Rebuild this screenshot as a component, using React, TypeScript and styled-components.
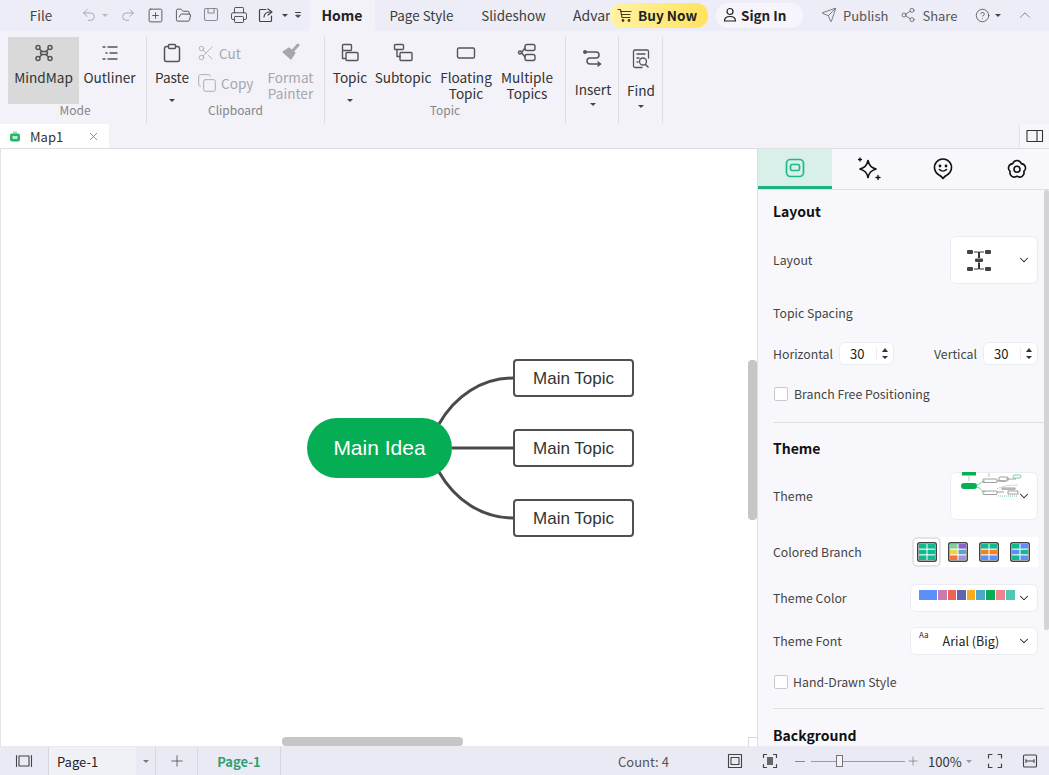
import React from 'react';
import styled, { createGlobalStyle } from 'styled-components';
import { Undo2, Redo2, SquarePlus, FolderOpen, Printer, Send, Share2, CircleHelp, ChevronUp, ChevronDown, X, Plus, Scissors, Copy } from 'lucide-react';

const Global = createGlobalStyle`
  html, body { margin: 0; padding: 0; height: 100%; overflow: hidden; }
  body { font-family: "Noto Sans CJK SC", "Noto Sans", sans-serif; color: #333; background: #f2f2f8; }
  #root { height: 100%; }
  svg { display: block; flex: none; }
`;

const Page = styled.div`
  width: 1049px; height: 775px; display: flex; flex-direction: column; overflow: hidden; font-size: 13px;
`;

/* ---------- title bar ---------- */
const TopBar = styled.div`
  height: 31px; flex: none; box-sizing: border-box; padding-bottom: 1px; display: flex; align-items: center; background: #ecedf6; font-size: 13.4px;
`;
const QuickGroup = styled.div`
  width: 309px; height: 100%; display: flex; align-items: center; flex: none;
`;
const QuickBtn = styled.div<{ $w: number; $off?: boolean }>`
  width: ${p => p.$w}px; height: 100%; flex: none; display: flex; align-items: center; justify-content: center;
  color: ${p => (p.$off ? '#8f8f96' : '#444')};
`;
const MenuTab = styled.div<{ $w: number; $active?: boolean }>`
  width: ${p => p.$w}px; height: 31px; flex: none; display: flex; align-items: center; justify-content: center;
  background: ${p => (p.$active ? '#f2f2f8' : 'transparent')};
  font-weight: ${p => (p.$active ? 700 : 400)};
  font-size: ${p => (p.$active ? 14 : 13.4)}px;
  color: ${p => (p.$active ? '#222' : '#3c3c3c')};
  padding-bottom: 1px; box-sizing: border-box; margin-top: 1px;
`;
const ClippedTab = styled.div`
  width: 51px; height: 100%; flex: none; padding-left: 14px; box-sizing: border-box; display: flex; align-items: center;
  overflow: hidden; white-space: nowrap; color: #3c3c3c; font-size: 14px;
`;
const BuyPill = styled.div`
  width: 98px; height: 25px; flex: none; box-sizing: border-box; padding-left: 7px; display: flex; align-items: center; gap: 5px;
  border-radius: 12px; background: linear-gradient(90deg, #fff3a6, #ffe35e); font-weight: 700; color: #222; font-size: 13.6px;
`;
const SignPill = styled.div`
  width: 87px; height: 25px; flex: none; margin-left: 8px; box-sizing: border-box; padding-left: 7px; display: flex; align-items: center; gap: 4px;
  border-radius: 12px; background: #f5f5fb; font-weight: 700; color: #222; font-size: 13.5px;
`;
const ShareAction = styled.div<{ $ml: number }>`
  margin-left: ${p => p.$ml}px; display: flex; align-items: center; gap: 6px; color: #555; flex: none; font-size: 13px;
`;
const HelpBox = styled.div`
  margin-left: 18px; display: flex; align-items: center; gap: 5px; color: #444; flex: none;
`;
const Collapse = styled.div`
  margin-left: 15px; color: #666; flex: none;
`;
const Caret = styled.span<{ $c?: string; $mt?: number }>`
  display: block; width: 0; height: 0; flex: none;
  border-left: 3px solid transparent; border-right: 3px solid transparent;
  border-top: 3px solid ${p => p.$c || '#444'};
  margin-top: ${p => p.$mt || 0}px;
`;

/* ---------- ribbon ---------- */
const Ribbon = styled.div`
  height: 93px; flex: none; display: flex; background: #f2f2f8; box-sizing: border-box; padding-top: 6px;
`;
const Group = styled.div<{ $w: number; $pl?: number }>`
  width: ${p => p.$w}px; flex: none; box-sizing: border-box; padding-left: ${p => p.$pl || 0}px; height: 86px;
  display: flex; flex-direction: column; border-right: 1px solid #dcdce3;
`;
const GroupRow = styled.div`
  height: 67px; display: flex; flex: none;
`;
const GroupLabel = styled.div<{ $pr?: number }>`
  height: 12px; line-height: 12px; margin-top: 0; display: flex; align-items: center; justify-content: center;
  font-size: 12px; color: #85858b; padding-right: ${p => p.$pr || 0}px;
`;
const Tool = styled.div<{ $w: number; $active?: boolean; $off?: boolean; $tall?: boolean }>`
  width: ${p => p.$w}px; height: 67px; flex: none; display: flex; flex-direction: column; align-items: center;
  padding-top: ${p => (p.$tall ? 12 : 6)}px; box-sizing: border-box;
  background: ${p => (p.$active ? '#d9d9d9' : 'transparent')};
  color: ${p => (p.$off ? '#a6a6ac' : '#333')};
  font-size: 13.6px; line-height: 16px; text-align: center; white-space: nowrap;
`;
const ToolIcon = styled.div<{ $mb: number }>`
  height: 20px; display: flex; align-items: center; justify-content: center; margin-bottom: ${p => p.$mb}px; color: #555;
`;
const SmallStack = styled.div`
  width: 72px; flex: none; display: flex; flex-direction: column; padding-top: 1px; box-sizing: border-box;
`;
const SmallTool = styled.div`
  height: 30px; display: flex; align-items: center; gap: 4px; color: #a6a6ac; font-size: 13.6px;
`;

/* ---------- doc tabs ---------- */
const DocStrip = styled.div`
  height: 24px; flex: none; display: flex; justify-content: space-between; background: #f2f2f8;
`;
const DocTab = styled.div`
  width: 109px; box-sizing: border-box; background: #fff; display: flex; align-items: center; padding-left: 9px; font-size: 13px; color: #333;
`;
const DocName = styled.span`
  margin-left: 9px; width: 57px;
`;
const PanelToggle = styled.div`
  width: 30px; box-sizing: border-box; background: #f7f7fb; border-left: 1px solid #e3e3e8; display: flex; align-items: center; justify-content: center; color: #444;
`;

/* ---------- main ---------- */
const Main = styled.div`
  flex: 1; display: flex; min-height: 0; border-top: 1px solid #dfdfe3;
`;
const Canvas = styled.div`
  width: 757px; flex: none; position: relative; background: #fff; border-left: 1px solid #e3e3e8; box-sizing: border-box; overflow: hidden;
`;
const Connectors = styled.svg`
  position: absolute; left: -1px; top: 0; width: 757px; height: 597px;
`;
const RootNode = styled.div`
  position: absolute; left: 306px; top: 269px; width: 145px; height: 60px; border-radius: 30px; background: #05ae55; color: #fff;
  display: flex; align-items: center; justify-content: center; font: 21px "Liberation Sans", sans-serif;
`;
const TopicNode = styled.div<{ $top: number }>`
  position: absolute; left: 512px; top: ${p => p.$top}px; width: 121px; height: 38px; box-sizing: border-box; padding-top: 1px;
  border: 2px solid #505050; border-radius: 4px; background: #fff; color: #333;
  display: flex; align-items: center; justify-content: center; font: 17px "Liberation Sans", sans-serif;
`;
const VScroll = styled.div`
  position: absolute; right: 0; top: 211px; width: 9px; height: 160px; border-radius: 4px; background: #c6c6c6;
`;
const HScroll = styled.div`
  position: absolute; left: 281px; bottom: 0; width: 181px; height: 9px; border-radius: 4px; background: #c6c6c6;
`;
const ScrollCorner = styled.div`
  position: absolute; right: 0; bottom: 0; width: 8px; height: 8px; border-left: 1px solid #d8d8d8; border-top: 1px solid #d8d8d8;
`;

/* ---------- side panel ---------- */
const Panel = styled.div`
  width: 292px; flex: none; position: relative; box-sizing: border-box; border-left: 1px solid #dfdfe3; background: #f8f8fc; display: flex; flex-direction: column; overflow: hidden;
`;
const PanelTabs = styled.div`
  height: 41px; flex: none; display: flex; border-bottom: 1px solid #dfdfe3; box-sizing: border-box;
`;
const PanelTab = styled.div<{ $active?: boolean }>`
  width: 74px; flex: none; display: flex; align-items: center; justify-content: center; box-sizing: border-box;
  background: ${p => (p.$active ? '#d9efe9' : 'transparent')};
  border-bottom: 3px solid ${p => (p.$active ? '#1cb286' : 'transparent')};
  height: 40px; padding-top: ${p => (p.$active ? 0 : 3)}px;
`;
const PanelBody = styled.div`
  padding: 0 5px 0 15px; display: flex; flex-direction: column; flex: 1; min-height: 0; font-size: 12.3px; color: #444; line-height: 18px;
`;
const SectionTitle = styled.div<{ $mt: number }>`
  margin-top: ${p => p.$mt}px; height: 20px; line-height: 20px; font-size: 14px; font-weight: 700; color: #111; flex: none;
`;
const Row = styled.div<{ $h: number; $mt: number }>`
  height: ${p => p.$h}px; margin-top: ${p => p.$mt}px; display: flex; align-items: center; justify-content: space-between; flex: none; padding-right: 6px;
`;
const SelectBox = styled.div<{ $w: number; $h: number; $pl?: number }>`
  width: ${p => p.$w}px; height: ${p => p.$h}px; flex: none; position: relative; box-sizing: border-box; background: #fff; border: 1px solid #ecedf2; border-radius: 6px;
  display: flex; align-items: center; justify-content: space-between; padding: 0 6px 0 ${p => p.$pl || 8}px; color: #222;
`;
const ChevronOver = styled.div`
  position: absolute; right: 6px; top: 16px; color: #222;
`;
const ThumbOver = styled.svg`
  position: absolute; left: 9px; top: -1px;
`;
const NumberGroup = styled.div`
  display: flex; align-items: center; gap: 6px;
`;
const NumberBox = styled.div`
  width: 55px; height: 23px; flex: none; box-sizing: border-box; background: #fff; border: 1px solid #ecedf2; border-radius: 6px;
  display: flex; align-items: center; justify-content: space-between; padding: 0 5px 0 10px; color: #222; font-size: 13px;
`;
const Steppers = styled.div`
  display: flex; flex-direction: column; gap: 4px; border-left: 1px solid #ecedf2; padding-left: 5px;
`;
const CaretUp = styled.span`
  display: block; width: 0; height: 0; border-left: 3px solid transparent; border-right: 3px solid transparent; border-bottom: 4px solid #333;
`;
const CheckRow = styled.label<{ $mt: number; $gap: number }>`
  margin-top: ${p => p.$mt}px; height: 18px; display: flex; align-items: center; gap: ${p => p.$gap}px; flex: none;
`;
const CheckBox = styled.span`
  width: 14px; height: 14px; box-sizing: border-box; background: #fff; border: 1px solid #c8c8ce; border-radius: 2px; display: block; margin-left: 1px;
`;
const Divider = styled.div<{ $mt: number }>`
  margin-top: ${p => p.$mt}px; height: 1px; background: #dfdfe4; flex: none;
`;
const SwatchRow = styled.div`
  display: flex; align-items: center; gap: 2px; background: #fff; width: 126px; height: 30px; flex: none;
`;
const Swatch = styled.div<{ $active?: boolean }>`
  width: 29px; height: 30px; flex: none; box-sizing: border-box; display: flex; align-items: center; justify-content: center;
  border: 2px solid ${p => (p.$active ? '#e4e4e8' : 'transparent')}; border-radius: 5px;
`;
const ColorStrip = styled.div`
  display: flex; margin-top: -7px;
`;
const ColorCell = styled.span<{ $c: string; $w: number }>`
  display: block; width: ${p => p.$w}px; height: 10px; background: ${p => p.$c}; margin-right: 1px;
`;
const FontName = styled.span`
  font-size: 12.5px; color: #222; margin-left: 14px; margin-right: auto;
`;
const AaMark = styled.span`
  font-size: 8px; color: #222; align-self: flex-start; margin-top: 1px; line-height: 12px;
`;
const PanelScroll = styled.div`
  position: absolute; right: 0; top: 41px; width: 5px; height: 440px; background: #d4d4d6; border-radius: 2px;
`;

/* ---------- status bar ---------- */
const Status = styled.div`
  height: 29px; flex: none; box-sizing: border-box; padding-top: 1px; display: flex; align-items: center; background: #e9eaf3; color: #444; font-size: 13px;
`;
const StatusCell = styled.div<{ $w: number; $sep?: boolean }>`
  width: ${p => p.$w}px; height: 100%; flex: none; box-sizing: border-box; display: flex; align-items: center; justify-content: center;
  border-right: ${p => (p.$sep ? '1px solid #d6d7e0' : 'none')};
`;
const PagePick = styled.div`
  width: 87px; height: 100%; flex: none; box-sizing: border-box; padding-left: 8px; background: #f0f0f7; display: flex; align-items: center; color: #222;
`;
const ActivePage = styled.span`
  color: #2f9f75; font-weight: 700;
`;
const CountText = styled.div`
  width: 100px; flex: none; margin-left: 337px; color: #555; white-space: nowrap;
`;
const ZoomMinus = styled.span`
  display: block; width: 10px; height: 1px; background: #888;
`;
const Slider = styled.div`
  width: 94px; height: 1px; background: #9b9ba3; flex: none; position: relative;
`;
const Thumb = styled.div`
  position: absolute; left: 25px; top: -6px; width: 7px; height: 12px; box-sizing: border-box; background: #f4f4f8; border: 1px solid #777;
`;
const ZoomText = styled.div`
  margin-left: 7px; font-size: 13px; color: #333; display: flex; align-items: center; gap: 4px; width: 50px; flex: none;
`;

/* ---------- drawn icons ---------- */
const S = ({ w = 20, h = 20, sw = 1.3, c = 'currentColor', children }: { w?: number; h?: number; sw?: number; c?: string; children: React.ReactNode }) => (
  <svg width={w} height={h} viewBox={`0 0 ${w} ${h}`} fill="none" stroke={c} strokeWidth={sw} strokeLinecap="round" strokeLinejoin="round">{children}</svg>
);

const SaveIc = () => (
  <S w={16} h={16} sw={1.1} c="#8b8b92"><rect x="1.5" y="1.5" width="13" height="12" rx="1.5" /><path d="M5 2v4h6V2" /></S>
);
const ExportIc = () => (
  <S w={16} h={16} sw={1.2}><path d="M8 2.5H2.5a1 1 0 0 0-1 1v10a1 1 0 0 0 1 1h10a1 1 0 0 0 1-1V9" /><path d="M6 10c.3-3 2.5-5 6-5M10 2l4 3-4 3" /></S>
);
const MoreIc = () => (
  <S w={8} h={10} sw={1}><path d="M1.5 2.5h5" /><path d="M2 5.5l2 2 2-2z" fill="#444" /></S>
);
const MindMapIc = () => (
  <S w={20} h={18} sw={1.5}>
    <circle cx="4" cy="3.5" r="2" /><circle cx="16" cy="3.5" r="2" /><circle cx="4" cy="14.5" r="2" /><circle cx="16" cy="14.5" r="2" />
    <rect x="6.5" y="7.5" width="7" height="3" rx="1.5" />
    <path d="M5.5 5l2.5 2.5M14.5 5L12 7.5M5.5 13L8 10.5M14.5 13L12 10.5" />
  </S>
);
const OutlinerIc = () => (
  <S w={18} h={16} sw={1.4}><path d="M2 2h2M7 2h9M5 8h1M9 8h7M2 14h2M7 14h9" /></S>
);
const PasteIc = () => (
  <S w={18} h={20} sw={1.5}><rect x="1.5" y="3.5" width="15" height="15" rx="2" /><rect x="5.5" y="1.5" width="7" height="4" rx="1" fill="#f2f2f8" /></S>
);
const PainterIc = () => (
  <S w={20} h={20} sw={1.2} c="#a6a6ac">
    <path d="M2 9L8 5l6 5-4 6z" fill="#a6a6ac" /><path d="M12.5 7L17 2" strokeWidth="3" />
  </S>
);
const TopicIc = () => (
  <S w={18} h={20} sw={1.4}><rect x="1.5" y="1.5" width="9" height="6" rx="1" /><path d="M1.5 7.5v8h3" /><rect x="5" y="9.5" width="12" height="8" rx="1" /></S>
);
const SubtopicIc = () => (
  <S w={20} h={20} sw={1.4}><rect x="1.5" y="1.5" width="9" height="5" rx="1" /><path d="M4 6.5v7h3" /><rect x="7" y="9.5" width="12" height="8" rx="1" /></S>
);
const FloatIc = () => (
  <S w={20} h={16} sw={1.4}><rect x="1.5" y="3" width="17" height="10" rx="1.5" /></S>
);
const MultiIc = () => (
  <S w={20} h={20} sw={1.4}>
    <rect x="8" y="1.5" width="10" height="6" rx="2" /><rect x="8" y="11.5" width="10" height="6" rx="2" /><circle cx="3" cy="9.5" r="1.5" />
    <path d="M4.5 9.5L8 5M4.5 9.5L8 14" />
  </S>
);
const InsertIc = () => (
  <S w={20} h={18} sw={1.5}>
    <path d="M2 3h11a3 3 0 0 1 0 6H7a3 3 0 0 0 0 6h10" /><circle cx="2" cy="3" r="1.2" fill="#555" /><path d="M15 13l2.5 2-2.5 2" fill="#555" />
  </S>
);
const FindIc = () => (
  <S w={18} h={20} sw={1.3}>
    <path d="M10 18.5H3a1.5 1.5 0 0 1-1.5-1.5V2.5A1.5 1.5 0 0 1 3 1h12a1.5 1.5 0 0 1 1.5 1.5V9" /><path d="M5 5h8M5 9h2M5 13h1" />
    <circle cx="11" cy="12.5" r="3.5" /><path d="M13.5 15.5l2.5 2.5" strokeWidth="1.6" />
  </S>
);
const CartIc = () => (
  <S w={16} h={16} sw={1.2} c="#4a3d10"><path d="M1 2.5h2.5l1.5 8h8" /><path d="M4 4.5h10M4.5 7.5h8.5" /><circle cx="6" cy="13.5" r=".8" fill="#4a3d10" /><circle cx="12" cy="13.5" r=".8" fill="#4a3d10" /></S>
);
const UserIc = () => (
  <S w={14} h={16} sw={1.2} c="#222"><circle cx="7" cy="4.5" r="3" /><path d="M1.5 14c0-3 2.5-4.5 5.5-4.5s5.5 1.5 5.5 4.5z" /></S>
);
const MapIc = () => (
  <svg width="12" height="12" viewBox="0 0 12 12"><path d="M4 1.5h4v2H4z" fill="#9adfb4" /><rect x="1" y="3.5" width="10" height="8" rx="2" fill="#22b76a" /><rect x="3.5" y="6" width="5" height="3" fill="#b8ecd0" /></svg>
);
const SideToggleIc = () => (
  <S w={18} h={14} sw={1.1} c="#333"><rect x="1" y="1.5" width="15.5" height="11" /><path d="M11 1.5v11" /></S>
);
const StyleTabIc = () => (
  <S w={20} h={20} sw={1.7} c="#1fb98c"><rect x="1.5" y="1.5" width="17" height="17" rx="4" /><rect x="5.5" y="6.5" width="9" height="6" rx="1.5" /></S>
);
const SparkleIc = () => (
  <S w={24} h={24} sw={1.7} c="#111">
    <path d="M11 3.5c1 5 3 7 8 8.5-5 1.5-7 3.5-8 8.5-1-5-3-7-8-8.5 5-1.5 7-3.5 8-8.5z" />
    <path d="M3 1v3M1.5 2.5h3M21 18.5v4M19 20.5h4" strokeWidth="1.3" />
  </S>
);
const PinSmileIc = () => (
  <S w={20} h={22} sw={1.6} c="#111">
    <path d="M10 20.5c-1-1.5-2-2.5-4-3.5a8.5 8.5 0 1 1 8 0c-2 1-3 2-4 3.5z" />
    <circle cx="7" cy="8" r=".6" fill="#111" /><circle cx="13" cy="8" r=".6" fill="#111" /><path d="M6.5 11.5c2 2 5 2 7 0" />
  </S>
);
const FlowerIc = () => (
  <S w={20} h={20} sw={1.6} c="#111">
    <path d="M5.8 4.6A4.4 4.4 0 0 1 14.2 4.6 A4.4 4.4 0 0 1 16.85 12.4 A4.4 4.4 0 0 1 10 17.2 A4.4 4.4 0 0 1 3.15 12.4 A4.4 4.4 0 0 1 5.8 4.6z" />
    <circle cx="10" cy="10.2" r="3" />
  </S>
);
const LayoutIc = () => (
  <svg width="26" height="26" viewBox="0 0 26 26" fill="none" stroke="#333" strokeWidth="1">
    <rect x="1" y="3" width="6" height="4" rx="1" fill="#444" stroke="none" /><rect x="19" y="3" width="6" height="4" rx="1" fill="#444" stroke="none" />
    <rect x="9" y="11.5" width="8" height="3.5" rx="1" fill="#444" stroke="none" />
    <rect x="1" y="20" width="6" height="4" rx="1" fill="#444" stroke="none" /><rect x="19" y="20" width="6" height="4" rx="1" fill="#444" stroke="none" />
    <path d="M8 5h4.5v6M18 5h-4.5v6M8 22h4.5v-6.5M18 22h-4.5v-6.5" />
  </svg>
);
const ThemeThumb = () => (
  <ThumbOver width="62" height="26" viewBox="0 0 62 26" fill="none" stroke="#777" strokeWidth=".7">
    <rect x="2" y="0" width="14" height="3.5" fill="#06ae55" stroke="none" />
    <path d="M9 4v5" stroke="#aaa" />
    <rect x="1" y="11" width="16" height="6" rx="3" fill="#06ae55" stroke="none" />
    <path d="M17 13c4-1 5-4 8-4M17 15c4 1 5 5 8 5" stroke="#3bb77a" />
    <rect x="23" y="7" width="14" height="3.5" rx=".5" /><rect x="23" y="19" width="14" height="3.5" rx=".5" />
    <path d="M37 9h9M37 20h7M46 7h10" /><rect x="39" y="5" width="9" height="4" rx="1" />
    <rect x="42" y="16" width="13" height="1.2" /><rect x="48" y="19" width="10" height="3" />
    <rect x="53" y="3" width="8" height="3" rx="1.5" stroke="#3bb77a" />
    <path d="M37 17c6-3 12-4 21-4M38 24h20" stroke="#3bb77a" strokeDasharray="1 1" />
    <path d="M29 1v4" stroke="#aaa" />
  </ThumbOver>
);
const BranchIc = ({ cells }: { cells: string[] }) => (
  <svg width="20" height="20" viewBox="0 0 20 20">
    <rect x=".75" y=".75" width="18.5" height="18.5" rx="2" fill="#fff" stroke="#444" strokeWidth="1.5" />
    {cells.map((c, i) => (
      <rect key={i} x={i % 2 ? 10.5 : 2} y={[2, 2, 7.7, 7.7, 13.4, 13.4][i]} width="7.5" height="4.6" fill={c} />
    ))}
  </svg>
);
const StatusPagesIc = () => (
  <S w={18} h={14} sw={1.1} c="#444"><path d="M1.5 1.5v11M16.5 1.5v11" /><rect x="4" y="2" width="10" height="10" /></S>
);
const FitPageIc = () => (
  <S w={16} h={16} sw={1.1} c="#444"><rect x="1.5" y="1.5" width="13" height="13" /><rect x="4" y="4.5" width="8" height="7" /></S>
);
const FitSelIc = () => (
  <S w={16} h={16} sw={1.2} c="#444">
    <path d="M1.5 4.5v-3h3M11.5 1.5h3v3M1.5 11.5v3h3M11.5 14.5h3v-3" /><rect x="5" y="4" width="6" height="8" fill="#666" stroke="none" />
  </S>
);
const FullIc = () => (
  <S w={16} h={16} sw={1.2} c="#444"><path d="M1.5 5V1.5H5M11 1.5h3.5V5M1.5 11v3.5H5M11 14.5h3.5V11" /></S>
);
const FitWidthIc = () => (
  <S w={16} h={16} sw={1.1} c="#444"><rect x="1.5" y="2" width="13" height="12" rx="1" /><path d="M4 8h8M4 6.5v3M12 6.5v3" /></S>
);

const branchSets = [
  ['#10b98f', '#10b98f', '#10b98f', '#10b98f', '#10b98f', '#10b98f'],
  ['#7fcf9a', '#8a63d2', '#f0cf4e', '#58a9c8', '#f4743c', '#a193e0'],
  ['#10b98f', '#10b98f', '#f58220', '#f58220', '#5b8ff9', '#5b8ff9'],
  ['#10b98f', '#5b8ff9', '#5b8ff9', '#10b98f', '#10b98f', '#5b8ff9'],
];
const themeColors: [string, number][] = [
  ['#5b8ff9', 18], ['#c97bb0', 9], ['#ee6352', 8], ['#6464ae', 9], ['#faac1e', 8], ['#4ea6c9', 9], ['#07ae55', 9], ['#f2828f', 9], ['#4dc8b4', 9],
];

export default function App() {
  return (
    <Page>
      <Global />
      <TopBar>
        <QuickGroup>
          <QuickBtn $w={82}>File</QuickBtn>
          <QuickBtn $w={14} $off><Undo2 size={16} strokeWidth={1.1} /></QuickBtn>
          <QuickBtn $w={18}><Caret $c="#bbb" /></QuickBtn>
          <QuickBtn $w={27} $off><Redo2 size={16} strokeWidth={1.1} /></QuickBtn>
          <QuickBtn $w={28}><SquarePlus size={17} strokeWidth={1.2} /></QuickBtn>
          <QuickBtn $w={28}><FolderOpen size={17} strokeWidth={1.2} /></QuickBtn>
          <QuickBtn $w={28}><SaveIc /></QuickBtn>
          <QuickBtn $w={28}><Printer size={18} strokeWidth={1.2} /></QuickBtn>
          <QuickBtn $w={26}><ExportIc /></QuickBtn>
          <QuickBtn $w={12}><Caret /></QuickBtn>
          <QuickBtn $w={14}><MoreIc /></QuickBtn>
        </QuickGroup>
        <MenuTab $w={66} $active>Home</MenuTab>
        <MenuTab $w={93}>Page Style</MenuTab>
        <MenuTab $w={91}>Slideshow</MenuTab>
        <ClippedTab>Advanced</ClippedTab>
        <BuyPill><CartIc />Buy Now</BuyPill>
        <SignPill><UserIc />Sign In</SignPill>
        <ShareAction $ml={18}><Send size={16} strokeWidth={1.1} />Publish</ShareAction>
        <ShareAction $ml={12}><Share2 size={16} strokeWidth={1.1} />Share</ShareAction>
        <HelpBox><CircleHelp size={15} strokeWidth={1.2} /><Caret /></HelpBox>
        <Collapse><ChevronUp size={18} strokeWidth={1} /></Collapse>
      </TopBar>

      <Ribbon>
        <Group $w={147} $pl={8}>
          <GroupRow>
            <Tool $w={71} $active><ToolIcon $mb={6}><MindMapIc /></ToolIcon>MindMap</Tool>
            <Tool $w={61}><ToolIcon $mb={6}><OutlinerIc /></ToolIcon>Outliner</Tool>
          </GroupRow>
          <GroupLabel $pr={4}>Mode</GroupLabel>
        </Group>
        <Group $w={178}>
          <GroupRow>
            <Tool $w={50}>
              <ToolIcon $mb={6}><PasteIc /></ToolIcon>Paste<Caret $mt={14} />
            </Tool>
            <SmallStack>
              <SmallTool><Scissors size={18} strokeWidth={1.1} />Cut</SmallTool>
              <SmallTool><Copy size={20} strokeWidth={1.1} />Copy</SmallTool>
            </SmallStack>
            <Tool $w={43} $off>
              <ToolIcon $mb={6}><PainterIc /></ToolIcon>Format<br />Painter
            </Tool>
          </GroupRow>
          <GroupLabel>Clipboard</GroupLabel>
        </Group>
        <Group $w={241}>
          <GroupRow>
            <Tool $w={50}><ToolIcon $mb={6}><TopicIc /></ToolIcon>Topic<Caret $mt={14} /></Tool>
            <Tool $w={56}><ToolIcon $mb={6}><SubtopicIc /></ToolIcon>Subtopic</Tool>
            <Tool $w={70}><ToolIcon $mb={6}><FloatIc /></ToolIcon>Floating<br />Topic</Tool>
            <Tool $w={52}><ToolIcon $mb={6}><MultiIc /></ToolIcon>Multiple<br />Topics</Tool>
          </GroupRow>
          <GroupLabel>Topic</GroupLabel>
        </Group>
        <Group $w={53}>
          <GroupRow>
            <Tool $w={54} $tall><ToolIcon $mb={14}><InsertIc /></ToolIcon>Insert<Caret $mt={6} /></Tool>
          </GroupRow>
        </Group>
        <Group $w={44}>
          <GroupRow>
            <Tool $w={44} $tall><ToolIcon $mb={13}><FindIc /></ToolIcon>Find<Caret $mt={7} /></Tool>
          </GroupRow>
        </Group>
      </Ribbon>

      <DocStrip>
        <DocTab><MapIc /><DocName>Map1</DocName><X size={13} strokeWidth={1.3} color="#666" /></DocTab>
        <PanelToggle><SideToggleIc /></PanelToggle>
      </DocStrip>

      <Main>
        <Canvas>
          <Connectors viewBox="0 0 757 597" fill="none" stroke="#4a4a4a" strokeWidth="3">
            <path d="M439 275C455 247 482 229 513 229" />
            <path d="M452 299H513" />
            <path d="M439 323C455 351 482 369 513 369" />
          </Connectors>
          <RootNode>Main Idea</RootNode>
          <TopicNode $top={210}>Main Topic</TopicNode>
          <TopicNode $top={280}>Main Topic</TopicNode>
          <TopicNode $top={350}>Main Topic</TopicNode>
          <VScroll />
          <HScroll />
          <ScrollCorner />
        </Canvas>
        <Panel>
          <PanelTabs>
            <PanelTab $active><StyleTabIc /></PanelTab>
            <PanelTab><SparkleIc /></PanelTab>
            <PanelTab><PinSmileIc /></PanelTab>
            <PanelTab><FlowerIc /></PanelTab>
          </PanelTabs>
          <PanelBody>
            <SectionTitle $mt={11}>Layout</SectionTitle>
            <Row $h={48} $mt={15}>
              Layout
              <SelectBox $w={88} $h={48} $pl={15}><LayoutIc /><ChevronDown size={14} strokeWidth={1.8} /></SelectBox>
            </Row>
            <Row $h={18} $mt={20}>Topic Spacing</Row>
            <Row $h={23} $mt={20}>
              <NumberGroup>Horizontal<NumberBox>30<Steppers><CaretUp /><Caret $c="#333" /></Steppers></NumberBox></NumberGroup>
              <NumberGroup>Vertical<NumberBox>30<Steppers><CaretUp /><Caret $c="#333" /></Steppers></NumberBox></NumberGroup>
            </Row>
            <CheckRow $mt={20} $gap={6}><CheckBox />Branch Free Positioning</CheckRow>
            <Divider $mt={19} />
            <SectionTitle $mt={15}>Theme</SectionTitle>
            <Row $h={48} $mt={14}>
              Theme
              <SelectBox $w={88} $h={48}><ThemeThumb /><ChevronOver><ChevronDown size={14} strokeWidth={1.8} /></ChevronOver></SelectBox>
            </Row>
            <Row $h={30} $mt={17}>
              Colored Branch
              <SwatchRow>
                {branchSets.map((s, i) => (
                  <Swatch key={i} $active={i === 0}><BranchIc cells={s} /></Swatch>
                ))}
              </SwatchRow>
            </Row>
            <Row $h={28} $mt={17}>
              Theme Color
              <SelectBox $w={128} $h={28}>
                <ColorStrip>{themeColors.map(([c, w]) => <ColorCell key={c} $c={c} $w={w} />)}</ColorStrip>
                <ChevronDown size={14} strokeWidth={1.8} />
              </SelectBox>
            </Row>
            <Row $h={28} $mt={15}>
              Theme Font
              <SelectBox $w={128} $h={28}>
                <AaMark>Aa</AaMark><FontName>Arial (Big)</FontName>
                <ChevronDown size={14} strokeWidth={1.8} />
              </SelectBox>
            </Row>
            <CheckRow $mt={18} $gap={5}><CheckBox />Hand-Drawn Style</CheckRow>
            <Divider $mt={17} />
            <SectionTitle $mt={16}>Background</SectionTitle>
          </PanelBody>
          <PanelScroll />
        </Panel>
      </Main>

      <Status>
        <StatusCell $w={49} $sep><StatusPagesIc /></StatusCell>
        <PagePick>Page-1</PagePick>
        <StatusCell $w={20} $sep><Caret $c="#777" /></StatusCell>
        <StatusCell $w={42} $sep><Plus size={18} strokeWidth={1} /></StatusCell>
        <StatusCell $w={83} $sep><ActivePage>Page-1</ActivePage></StatusCell>
        <CountText>Count: 4</CountText>
        <StatusCell $w={34}><FitPageIc /></StatusCell>
        <StatusCell $w={36}><FitSelIc /></StatusCell>
        <StatusCell $w={23}><ZoomMinus /></StatusCell>
        <Slider><Thumb /></Slider>
        <StatusCell $w={16}><Plus size={14} strokeWidth={1} color="#666" /></StatusCell>
        <ZoomText>100%<Caret $c="#999" /></ZoomText>
        <StatusCell $w={34}><FullIc /></StatusCell>
        <StatusCell $w={36}><FitWidthIc /></StatusCell>
      </Status>
    </Page>
  );
}
